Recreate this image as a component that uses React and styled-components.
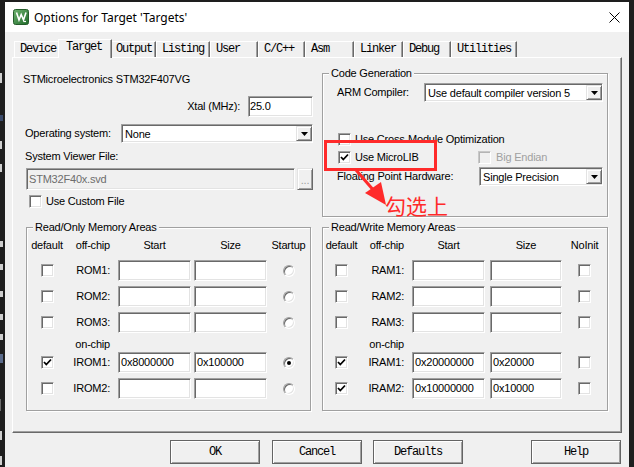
import React from 'react';
import styled, { createGlobalStyle, css } from 'styled-components';

const uiFont = css`
  font-family: "Liberation Sans", Arial, sans-serif;
  font-size: 11px;
  letter-spacing: -0.2px;
`;
const monoFont = css`
  font-family: "Liberation Mono", "DejaVu Sans Mono", monospace;
  font-size: 12px;
  letter-spacing: -1.2px;
`;
const sunken = css`
  border: 1px solid;
  border-color: #a0a0a0 #ffffff #ffffff #a0a0a0;
  box-shadow: inset 1px 1px 0 #696969, inset -1px -1px 0 #e3e3e3;
`;
const raised = css`
  border: 1px solid;
  border-color: #e3e3e3 #696969 #696969 #e3e3e3;
  box-shadow: inset 1px 1px 0 #ffffff, inset -1px -1px 0 #a0a0a0;
`;

const GlobalStyle = createGlobalStyle`
  html, body { margin: 0; padding: 0; background: #1e1e1e; }
  #root { width: 634px; height: 467px; }
`;

const Screen = styled.div`
  position: relative;
  width: 634px;
  height: 467px;
  display: flex;
  overflow: hidden;
  background: #1e1e1e;
`;

const EdgeStrip = styled.div`
  flex: none;
  width: 5px;
  overflow: hidden;
  display: flex;
  flex-direction: column;
`;
const EdgeMark = styled.span`
  flex: none;
  margin-top: ${(p) => p.$mt}px;
  width: ${(p) => p.$w}px;
  height: ${(p) => p.$h}px;
  background: ${(p) => p.$c || '#cfcfcf'};
`;

const Window = styled.div`
  flex: 1;
  min-width: 0;
  margin-top: 2px;
  display: flex;
  flex-direction: column;
  background: #f0f0f0;
`;
const TitleBar = styled.div`
  flex: none;
  height: 30px;
  background: #ffffff;
  display: flex;
  align-items: center;
  gap: 5px;
  padding: 0 9px 0 8px;
`;
const Title = styled.span`
  flex: 1;
  font-family: "Noto Sans", "Liberation Sans", sans-serif;
  font-size: 12px;
  color: #000;
  white-space: nowrap;
`;
const Body = styled.div`
  flex: 1;
  display: flex;
  flex-direction: column;
  padding: 7px 7px 3px 7px;
`;
const TabStrip = styled.div`
  position: relative;
  z-index: 2;
  height: 18px;
  display: flex;
  align-items: flex-end;
  padding-left: 2px;
`;
const Tab = styled.div`
  box-sizing: border-box;
  flex: none;
  width: ${(p) => p.$w}px;
  height: 16px;
  padding-left: 5px;
  ${monoFont};
  line-height: 15px;
  color: #000;
  white-space: nowrap;
  background: #f0f0f0;
  border-top: 1px solid #ffffff;
  border-left: 1px solid #ffffff;
  border-right: 1px solid #696969;
  box-shadow: inset -1px 0 0 #a0a0a0;
  ${(p) =>
    p.$active &&
    css`
      position: relative;
      z-index: 3;
      width: ${p.$w + 4}px;
      height: 19px;
      margin: 0 -2px -1px;
      padding-left: 7px;
      line-height: 14px;
    `}
`;
const Panel = styled.div`
  position: relative;
  z-index: 1;
  box-sizing: border-box;
  height: 376px;
  border: 1px solid;
  border-color: #ffffff #696969 #696969 #ffffff;
  box-shadow: inset -1px -1px 0 #a0a0a0;
  padding: 9px 13px 0 10px;
  display: grid;
  grid-template-columns: 290px 286px;
  column-gap: 9px;
  row-gap: 10px;
  align-content: start;
  align-items: start;
`;

const LeftTop = styled.div`
  display: flex;
  flex-direction: column;
`;
const Text = styled.span`
  ${uiFont};
  line-height: 13px;
  white-space: nowrap;
  color: ${(p) => (p.$muted ? '#a0a0a0' : '#000')};
  margin-top: ${(p) => p.$mt || 0}px;
  margin-left: ${(p) => p.$ml || 0}px;
  width: ${(p) => (p.$w ? `${p.$w}px` : 'auto')};
  flex: none;
`;
const CtrlRow = styled.div`
  display: flex;
  align-items: center;
  justify-content: ${(p) => p.$justify || 'flex-start'};
  gap: ${(p) => p.$gap || 0}px;
  height: ${(p) => p.$h}px;
  margin-top: ${(p) => p.$mt || 0}px;
  padding-left: ${(p) => p.$pl || 0}px;
`;
const Field = styled.div`
  box-sizing: border-box;
  flex: none;
  width: ${(p) => p.$w}px;
  height: ${(p) => p.$h}px;
  justify-self: ${(p) => p.$js || 'auto'};
  ${sunken};
  background: ${(p) => (p.$disabled ? '#f0f0f0' : '#ffffff')};
  color: ${(p) => (p.$disabled ? '#6d6d6d' : '#000')};
  ${uiFont};
  display: flex;
  align-items: center;
  padding: 0 2px 1px ${(p) => p.$pl ?? 2}px;
  white-space: nowrap;
  overflow: hidden;
`;
const SelectText = styled.span`
  flex: 1;
  overflow: hidden;
`;
const DropBtn = styled.span`
  box-sizing: border-box;
  flex: none;
  width: 16px;
  height: ${(p) => p.$h}px;
  margin-right: -1px;
  background: #f0f0f0;
  ${raised};
  display: flex;
  align-items: center;
  justify-content: center;
`;
const SmallBtn = styled.span`
  box-sizing: border-box;
  flex: none;
  width: 16px;
  height: 22px;
  background: #f0f0f0;
  ${raised};
  display: flex;
  align-items: center;
  justify-content: center;
  ${uiFont};
  color: #a0a0a0;
  padding-top: 2px;
`;
const CheckBox = styled.span`
  box-sizing: border-box;
  flex: none;
  width: 13px;
  height: 13px;
  justify-self: ${(p) => p.$js || 'auto'};
  margin-left: ${(p) => p.$ml || 0}px;
  ${sunken};
  background: ${(p) => (p.$disabled ? '#f0f0f0' : '#ffffff')};
  ${(p) =>
    p.$disabled &&
    css`
      border-color: #c8c8c8 #ffffff #ffffff #c8c8c8;
      box-shadow: inset 1px 1px 0 #b4b4b4;
    `}
  display: flex;
  align-items: center;
  justify-content: center;
`;
const Radio = styled.span`
  box-sizing: border-box;
  width: 12px;
  height: 12px;
  border-radius: 50%;
  justify-self: center;
  ${sunken};
  background: #ffffff;
  display: flex;
  align-items: center;
  justify-content: center;
  &::after {
    content: '';
    display: ${(p) => (p.$on ? 'block' : 'none')};
    width: 4px;
    height: 4px;
    border-radius: 50%;
    background: #000;
  }
`;
const CheckItem = styled.label`
  display: flex;
  align-items: center;
  gap: 4px;
  width: ${(p) => (p.$w ? `${p.$w}px` : 'auto')};
  flex: none;
`;

const GroupBox = styled.div`
  box-sizing: border-box;
  height: ${(p) => p.$h}px;
  margin: ${(p) => p.$m || '0'};
  border: 1px solid #a0a0a0;
  box-shadow: 1px 1px 0 #ffffff, inset 1px 1px 0 #ffffff;
  display: flex;
  flex-direction: column;
  padding: 0 ${(p) => p.$pr || 0}px 0 ${(p) => p.$pl || 0}px;
`;
const Legend = styled.span`
  ${uiFont};
  line-height: 13px;
  align-self: flex-start;
  margin: -7px 0 0 ${(p) => p.$ml}px;
  padding: 0 2px;
  background: #f0f0f0;
  white-space: nowrap;
`;
const MemRow = styled.div`
  display: grid;
  grid-template-columns: ${(p) => p.$cols};
  height: ${(p) => p.$h}px;
  margin-top: ${(p) => p.$mt || 0}px;
  margin-bottom: ${(p) => p.$mb || 0}px;
  align-items: center;
`;
const Cell = styled.span`
  ${uiFont};
  line-height: 13px;
  white-space: nowrap;
  justify-self: ${(p) => p.$align || 'start'};
  width: ${(p) => (p.$w ? `${p.$w}px` : 'auto')};
  text-align: center;
  grid-column: ${(p) => p.$col || 'auto'};
`;

const ButtonRow = styled.div`
  display: flex;
  justify-content: flex-end;
  margin-top: 7px;
  padding-right: 1px;
`;
const DlgButton = styled.div`
  box-sizing: border-box;
  width: 90px;
  height: 24px;
  margin-right: ${(p) => p.$mr || 0}px;
  background: #f0f0f0;
  border: 1px solid #646464;
  box-shadow: inset 1px 1px 0 #ffffff, inset -1px -1px 0 #a0a0a0;
  ${monoFont};
  color: #000;
  display: flex;
  align-items: center;
  justify-content: center;
`;

const Overlay = styled.svg`
  position: absolute;
  left: 0;
  top: 0;
  width: 634px;
  height: 467px;
  pointer-events: none;
  z-index: 5;
`;
const Note = styled.span`
  position: absolute;
  left: 385px;
  top: 195px;
  z-index: 5;
  font-family: "Noto Sans CJK SC", "Noto Sans", sans-serif;
  font-size: 21px;
  line-height: 21px;
  color: #ff2a2a;
`;

const Check = () => (
  <svg width="9" height="9" viewBox="0 0 9 9">
    <polyline points="1,4 3.3,6.5 8,1.5" fill="none" stroke="#000" strokeWidth="1.8" />
  </svg>
);

const Select = ({ w, h, children }) => (
  <Field $w={w} $h={h} $pl={3} style={{ paddingRight: 1, paddingBottom: 0 }}>
    <SelectText>{children}</SelectText>
    <DropBtn $h={h - 4}>
      <svg width="7" height="4" viewBox="0 0 7 4">
        <polygon points="0,0 7,0 3.5,4" fill="#000" />
      </svg>
    </DropBtn>
  </Field>
);

const TABS = [
  { label: 'Device', w: 46 },
  { label: 'Target', w: 50, active: true },
  { label: 'Output', w: 46 },
  { label: 'Listing', w: 54 },
  { label: 'User', w: 48 },
  { label: 'C/C++', w: 47 },
  { label: 'Asm', w: 49 },
  { label: 'Linker', w: 49 },
  { label: 'Debug', w: 48 },
  { label: 'Utilities', w: 66 },
];

/* fragments of the editor behind the dialog, visible at the left edge */
const EDGE = [
  { mt: 73, w: 2, h: 10 },
  { mt: 32, w: 3, h: 6, c: '#3a4a6a' },
  { mt: 20, w: 2, h: 8 },
  { mt: 15, w: 2, h: 8 },
  { mt: 69, w: 3, h: 6 },
  { mt: 17, w: 3, h: 6 },
  { mt: 21, w: 3, h: 6 },
  { mt: 17, w: 3, h: 6 },
  { mt: 14, w: 3, h: 6 },
  { mt: 14, w: 3, h: 9, c: '#5a6a8a' },
  { mt: 36, w: 1, h: 12, c: '#6a6a6a' },
  { mt: 20, w: 2, h: 9 },
  { mt: 16, w: 2, h: 9 },
];

const ROM_ROWS = [
  { name: 'ROM1:' },
  { name: 'ROM2:' },
  { name: 'ROM3:', mb: 5 },
  { onchip: true },
  { name: 'IROM1:', start: '0x8000000', size: '0x100000', def: true, last: true },
  { name: 'IROM2:', mb: 0 },
];
const RAM_ROWS = [
  { name: 'RAM1:' },
  { name: 'RAM2:' },
  { name: 'RAM3:', mb: 5 },
  { onchip: true },
  { name: 'IRAM1:', start: '0x20000000', size: '0x20000', def: true },
  { name: 'IRAM2:', start: '0x10000000', size: '0x10000', def: true, mb: 0 },
];

function MemArea({ title, cols, sizeW, lastHead, rows, kind, m }) {
  return (
    <GroupBox $h={184} $m={m}>
      <Legend $ml={6}>{title}</Legend>
      <MemRow $cols={cols} $h={13} $mt={5} $mb={8}>
        <Cell $align="center">default</Cell>
        <Cell $align="end">off-chip</Cell>
        <Cell $align="end" $w={73}>Start</Cell>
        <Cell $align="end" $w={sizeW}>Size</Cell>
        <Cell $align="center">{lastHead}</Cell>
      </MemRow>
      {rows.map((r, i) =>
        r.onchip ? (
          <MemRow key={i} $cols={cols} $h={13} $mb={1}>
            <Cell $align="end" $col="2">on-chip</Cell>
          </MemRow>
        ) : (
          <MemRow key={i} $cols={cols} $h={21} $mb={r.mb ?? 5}>
            <CheckBox $js="center">{r.def && <Check />}</CheckBox>
            <Cell $align="end">{r.name}</Cell>
            <Field $w={73} $h={21} $js="end">{r.start || ''}</Field>
            <Field $w={sizeW} $h={21} $js="end">{r.size || ''}</Field>
            {kind === 'radio' ? <Radio $on={r.last} /> : <CheckBox $js="center" />}
          </MemRow>
        )
      )}
    </GroupBox>
  );
}

export default function App() {
  return (
    <>
      <GlobalStyle />
      <Screen>
        <EdgeStrip>
          {EDGE.map((g, i) => (
            <EdgeMark key={i} $mt={g.mt} $w={g.w} $h={g.h} $c={g.c} />
          ))}
        </EdgeStrip>
        <Window>
          <TitleBar>
            <svg width="16" height="16" viewBox="0 0 16 16">
              <defs>
                <linearGradient id="kg" x1="0" y1="0" x2="1" y2="1">
                  <stop offset="0" stopColor="#6fb36f" />
                  <stop offset="1" stopColor="#1f6a2a" />
                </linearGradient>
              </defs>
              <rect x="0.5" y="0.5" width="15" height="15" rx="2" fill="url(#kg)" stroke="#245c2a" />
              <polyline points="3.5,3.5 6,11 8.2,5.5 10.5,11 13,3.5" fill="none" stroke="#fff" strokeWidth="1.6" />
              <path d="M10.5 12.5 h2.5" stroke="#fff" strokeWidth="1.2" />
            </svg>
            <Title>Options for Target 'Targets'</Title>
            <svg width="11" height="11" viewBox="0 0 11 11">
              <path d="M0.5 0.5 L10.5 10.5 M10.5 0.5 L0.5 10.5" stroke="#000" strokeWidth="1" />
            </svg>
          </TitleBar>
          <Body>
            <TabStrip>
              {TABS.map((t) => (
                <Tab key={t.label} $w={t.w} $active={t.active}>{t.label}</Tab>
              ))}
            </TabStrip>
            <Panel>
              <LeftTop>
                <Text $mt={6}>STMicroelectronics STM32F407VG</Text>
                <CtrlRow $h={21} $mt={10} $justify="flex-end" $gap={8}>
                  <Text>Xtal (MHz):</Text>
                  <Field $w={65} $h={21} $pl={1}>25.0</Field>
                </CtrlRow>
                <CtrlRow $h={19} $mt={7} $justify="space-between">
                  <Text $ml={2}>Operating system:</Text>
                  <Select w={192} h={19}>None</Select>
                </CtrlRow>
                <Text $mt={7} $ml={2}>System Viewer File:</Text>
                <CtrlRow $h={22} $mt={5} $gap={2} $pl={3}>
                  <Field $w={269} $h={22} $disabled>STM32F40x.svd</Field>
                  <SmallBtn>...</SmallBtn>
                </CtrlRow>
                <CtrlRow $h={13} $mt={5} $pl={6}>
                  <CheckItem>
                    <CheckBox />
                    <Text>Use Custom File</Text>
                  </CheckItem>
                </CtrlRow>
              </LeftTop>

              <GroupBox $h={144} $m="6px 0 0 0" $pl={14} $pr={3}>
                <Legend $ml={-8}>Code Generation</Legend>
                <CtrlRow $h={19} $mt={3}>
                  <Text $w={87}>ARM Compiler:</Text>
                  <Select w={179} h={19}>Use default compiler version 5</Select>
                </CtrlRow>
                <CtrlRow $h={13} $mt={31} $pl={1}>
                  <CheckItem>
                    <CheckBox />
                    <Text>Use Cross-Module Optimization</Text>
                  </CheckItem>
                </CtrlRow>
                <CtrlRow $h={13} $mt={5} $pl={1}>
                  <CheckItem $w={140}>
                    <CheckBox><Check /></CheckBox>
                    <Text>Use MicroLIB</Text>
                  </CheckItem>
                  <CheckItem>
                    <CheckBox $disabled />
                    <Text $muted $ml={1}>Big Endian</Text>
                  </CheckItem>
                </CtrlRow>
                <CtrlRow $h={19} $mt={3}>
                  <Text $w={142}>Floating Point Hardware:</Text>
                  <Select w={124} h={19}>Single Precision</Select>
                </CtrlRow>
              </GroupBox>

              <MemArea
                title="Read/Only Memory Areas"
                cols="40px 43px 81px 76px 1fr"
                sizeW={73}
                lastHead="Startup"
                rows={ROM_ROWS}
                kind="radio"
                m="0 2px 0 3px"
              />
              <MemArea
                title="Read/Write Memory Areas"
                cols="37px 44px 81px 77px 1fr"
                sizeW={72}
                lastHead="NoInit"
                rows={RAM_ROWS}
                kind="check"
              />
            </Panel>
            <ButtonRow>
              <DlgButton $mr={12}>OK</DlgButton>
              <DlgButton $mr={11}>Cancel</DlgButton>
              <DlgButton $mr={68}>Defaults</DlgButton>
              <DlgButton>Help</DlgButton>
            </ButtonRow>
          </Body>
        </Window>
        <EdgeStrip />
        <Overlay viewBox="0 0 634 467">
          <rect x="325.5" y="141.5" width="110" height="28" fill="none" stroke="#ff2a2a" strokeWidth="3" />
          <line x1="356" y1="170" x2="375" y2="192" stroke="#ff2a2a" strokeWidth="3" />
          <polygon points="365,193 381,182 386,205" fill="#ff2a2a" />
        </Overlay>
        <Note>勾选上</Note>
      </Screen>
    </>
  );
}
